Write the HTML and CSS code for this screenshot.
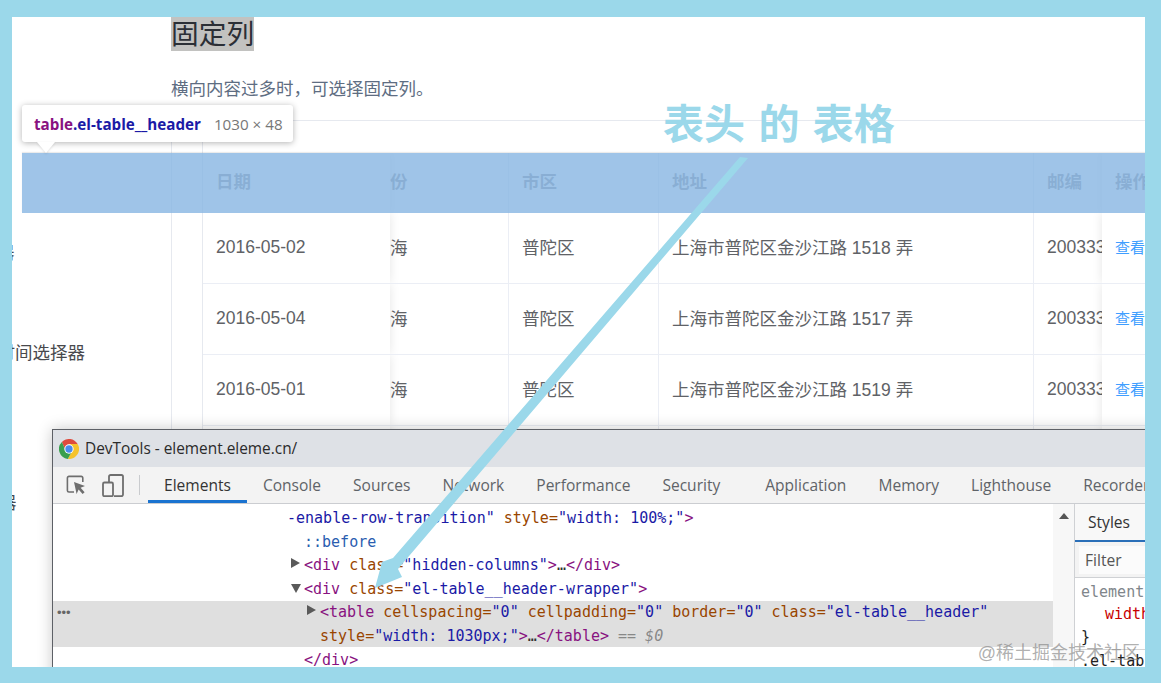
FILE: index.html
```html
<!DOCTYPE html>
<html lang="zh">
<head>
<meta charset="utf-8">
<title>固定列</title>
<link rel="stylesheet" href="styles.css">
</head>
<body>
<div class="canvas">
  <div class="doc">
    <aside class="side">
      <div class="side-item far">选择器</div>
      <div class="side-item"></div>
      <div class="side-item near">时间选择器</div>
      <div class="side-item"></div>
      <div class="side-item"></div>
      <div class="side-item far2">选择器</div>
    </aside>
    <main class="main">
      <h3 class="title"><span class="selected">固定列</span></h3>
      <p class="lead">横向内容过多时，可选择固定列。</p>
      <div class="table">
        <div class="gutter"></div>
        <div class="body">
          <div class="row head">
            <div class="cell fix-l">日期</div>
            <div class="cell clip">份</div>
            <div class="cell">市区</div>
            <div class="cell">地址</div>
            <div class="cell">邮编</div>
            <div class="cell fix-r">操作</div>
          </div>
          <div class="row">
            <div class="cell fix-l num">2016-05-02</div>
            <div class="cell clip">海</div>
            <div class="cell">普陀区</div>
            <div class="cell">上海市普陀区金沙江路 1518 弄</div>
            <div class="cell num">200333</div>
            <div class="cell fix-r"><span class="link">查看</span></div>
          </div>
          <div class="row">
            <div class="cell fix-l num">2016-05-04</div>
            <div class="cell clip">海</div>
            <div class="cell">普陀区</div>
            <div class="cell">上海市普陀区金沙江路 1517 弄</div>
            <div class="cell num">200333</div>
            <div class="cell fix-r"><span class="link">查看</span></div>
          </div>
          <div class="row">
            <div class="cell fix-l num">2016-05-01</div>
            <div class="cell clip">海</div>
            <div class="cell">普陀区</div>
            <div class="cell">上海市普陀区金沙江路 1519 弄</div>
            <div class="cell num">200333</div>
            <div class="cell fix-r"><span class="link">查看</span></div>
          </div>
          <div class="row">
            <div class="cell fix-l"></div>
            <div class="cell clip"></div>
            <div class="cell"></div>
            <div class="cell"></div>
            <div class="cell"></div>
            <div class="cell fix-r"></div>
          </div>
        </div>
      </div>
    </main>
  </div>

  <div class="band"></div>

  <div class="tip">
    <span class="tip-name"><span class="tip-tag">table</span><span class="tip-class">.el-table__header</span></span>
    <span class="tip-size">1030 × 48</span>
  </div>

  <div class="note">表头 的 表格</div>

  <section class="devtools">
    <header class="dt-title">
      <svg class="chrome" viewBox="0 0 24 24" aria-hidden="true">
        <path fill="#dd4b3e" d="M22.39 6A12 12 0 0 0 3.5 3.5L8 14l4-8z"/>
        <path fill="#f5c32c" d="M22.39 6H12l4 8-5.5 9.9A12 12 0 0 0 22.39 6z"/>
        <path fill="#3a9f4f" d="M3.5 3.5A12 12 0 0 0 10.5 23.9L16 14H8z"/>
        <circle cx="12" cy="12" r="5.6" fill="#fff"/>
        <circle cx="12" cy="12" r="4.4" fill="#4a8bec"/>
      </svg>
      <span>DevTools - element.eleme.cn/</span>
    </header>
    <nav class="dt-tabs">
      <svg class="ico-inspect" viewBox="0 0 20 20" aria-hidden="true">
        <path fill="none" stroke="#6e6e6e" stroke-width="1.6" d="M8 17H3a1.6 1.6 0 0 1-1.6-1.6V3A1.6 1.6 0 0 1 3 1.4h12.2A1.6 1.6 0 0 1 16.8 3v4"/>
        <path fill="#6e6e6e" d="M8 7l11 4-4.4 1.8 4 4.4-2 1.8-4-4.4L10.6 19z"/>
      </svg>
      <svg class="ico-device" viewBox="0 0 22 23" aria-hidden="true">
        <path fill="none" stroke="#6e6e6e" stroke-width="1.8" d="M7 8V2.6A1.6 1.6 0 0 1 8.6 1h10.8A1.6 1.6 0 0 1 21 2.6v18a1.6 1.6 0 0 1-1.6 1.6H12"/>
        <rect x="1" y="8.5" width="10" height="13.7" rx="1.4" fill="#f3f3f3" stroke="#6e6e6e" stroke-width="1.8"/>
      </svg>
      <span class="dt-sep"></span>
      <span class="tab on">Elements</span>
      <span class="tab">Console</span>
      <span class="tab">Sources</span>
      <span class="tab">Network</span>
      <span class="tab">Performance</span>
      <span class="tab">Security</span>
      <span class="tab tab-gap">Application</span>
      <span class="tab">Memory</span>
      <span class="tab">Lighthouse</span>
      <span class="tab">Recorder</span>
    </nav>
    <div class="dt-body">
      <div class="dom">
        <div class="ln l0"><span class="v">-enable-row-transition"</span><span class="a"> style=</span><span class="v">"width: 100%;"</span><span class="t">&gt;</span></div>
        <div class="ln l1"><span class="pseudo">::before</span></div>
        <div class="ln l1"><i class="tri"></i><span class="t">&lt;div</span><span class="a"> class=</span><span class="v">"hidden-columns"</span><span class="t">&gt;</span><span class="x">…</span><span class="t">&lt;/div&gt;</span></div>
        <div class="ln l1"><i class="tri down"></i><span class="t">&lt;div</span><span class="a"> class=</span><span class="v">"el-table__header-wrapper"</span><span class="t">&gt;</span></div>
        <div class="picked">
          <span class="dots">•••</span>
          <div class="ln l2"><i class="tri"></i><span class="t">&lt;table</span><span class="a"> cellspacing=</span><span class="v">"0"</span><span class="a"> cellpadding=</span><span class="v">"0"</span><span class="a"> border=</span><span class="v">"0"</span><span class="a"> class=</span><span class="v">"el-table__header"</span></div>
          <div class="ln l2"><span class="a">style=</span><span class="v">"width: 1030px;"</span><span class="t">&gt;</span><span class="x">…</span><span class="t">&lt;/table&gt;</span><span class="eq"> == $0</span></div>
        </div>
        <div class="ln l1"><span class="t">&lt;/div&gt;</span></div>
      </div>
      <div class="scroll"><i class="scroll-up"></i></div>
      <div class="styles">
        <div class="st-tab"><span>Styles</span></div>
        <div class="st-filter"><span>Filter</span></div>
        <div class="st-rules">
          <div class="rl gray">element.style {</div>
          <div class="rl red">width: 100%;</div>
          <div class="rl dark">}</div>
          <div class="rl dark sepd">.el-table</div>
        </div>
      </div>
    </div>
  </section>

  <svg class="arrow" viewBox="0 0 1161 683" aria-hidden="true">
    <polygon fill="#9bd8ea" points="740,157 748,158 398,569 402,577 375,588 382,562 393,558"/>
  </svg>

  <div class="mark">@稀土掘金技术社区</div>
</div>
</body>
</html>
```
FILE: styles.css
```css
* { box-sizing: border-box; }
html, body { margin: 0; padding: 0; }
body {
  width: 1161px;
  height: 683px;
  background: #9bd8ea;
  padding: 17px 16px 16px 12px;
  overflow: hidden;
  font-family: "Liberation Sans", "Noto Sans CJK SC", sans-serif;
}
.canvas {
  position: relative;
  width: 1133px;
  height: 650px;
  background: #fff;
  overflow: hidden;
}
.doc { display: flex; width: 1133px; height: 650px; }
.side {
  width: 159px;
  flex: none;
  padding-top: 211px;
  overflow: hidden;
  color: #48494d;
  font-size: 17.5px;
}
.side-item { height: 50px; line-height: 50px; white-space: nowrap; }
.near { margin-left: -14.5px; }
.far { margin-left: -50px; }
.far2 { margin-left: -48px; }
.main { flex: 1; min-width: 0; }
.title { margin: 0; height: 33.5px; font-weight: 400; font-size: 27.7px; line-height: 35.5px; color: #2b2f36; }
.selected { display: inline-block; height: 33.5px; background: #c2c2c0; }
.lead { margin: 0; height: 69.5px; padding-top: 26px; font-size: 17.5px; line-height: 25px; color: #5e6d82; }
.table { display: flex; border-left: 1px solid #e6e9ef; border-top: 1px solid #e6e9ef; }
.gutter { width: 31px; flex: none; border-right: 1px solid #e6e9ef; }
.body { padding-top: 32px; width: 960px; flex: none; }
.row {
  display: grid;
  grid-template-columns: 187px 119px 150px 375px 68px 44px;
  height: 71px;
  border-bottom: 1px solid #ebeef5;
  color: #606266;
  font-size: 17.5px;
}
.head { height: 60px; font-weight: 700; color: #909399; border-bottom: 0; }
.cell {
  display: flex;
  align-items: center;
  padding: 0 0 4px 13px;
  border-right: 1px solid #ebeef5;
  white-space: nowrap;
  overflow: hidden;
  background: #fff;
}
.head .cell { padding-bottom: 6px; }
.cell.num { padding-bottom: 2px; }
.cell:nth-child(5) { border-right: 0; }
.clip { padding-left: 0; }
.fix-l { position: relative; z-index: 2; border-right: 0; box-shadow: 0 0 10px rgba(0, 0, 0, .1); clip-path: inset(0 -12px 0 0); }
.fix-r { position: relative; z-index: 2; border-right: 0; box-shadow: 0 0 10px rgba(0, 0, 0, .1); clip-path: inset(0 0 0 -12px); }
.link { color: #409eff; font-size: 15px; }
.band {
  position: absolute;
  z-index: 3;
  left: 10px;
  top: 136px;
  right: 0;
  height: 60px;
  background: rgba(135, 181, 226, .8);
  box-shadow: 0 -1px 1px rgba(0, 0, 0, .08);
}
.tip {
  position: absolute;
  z-index: 4;
  left: 10px;
  top: 88px;
  width: 271px;
  height: 37px;
  padding: 1px 0 0 12px;
  display: flex;
  align-items: center;
  gap: 13px;
  background: #fff;
  border-radius: 3px;
  box-shadow: 0 1px 6px rgba(0, 0, 0, .3);
  font-family: "Open Sans", "Noto Sans", sans-serif;
  font-size: 15.2px;
  white-space: nowrap;
}
.tip::after {
  content: "";
  position: absolute;
  left: 15px;
  top: 37px;
  border: 9px solid transparent;
  border-bottom: 0;
  border-top: 11px solid #fff;
  filter: drop-shadow(0 1px 1px rgba(0, 0, 0, .12));
}
.tip-name { font-weight: 700; }
.tip-tag { color: #881280; }
.tip-class { color: #1a1aa6; }
.tip-size { color: #777; }
.note {
  position: absolute;
  z-index: 5;
  left: 651px;
  top: 82px;
  font-size: 41px;
  line-height: 52px;
  font-weight: 700;
  word-spacing: 2px;
  color: #9bd8ea;
  white-space: nowrap;
}
.devtools {
  position: absolute;
  z-index: 6;
  left: 40px;
  top: 412px;
  width: 1120px;
  height: 300px;
  background: #fff;
  border: 1px solid #5d6066;
  box-shadow: 0 0 14px rgba(0, 0, 0, .22);
  font-family: "Open Sans", "Noto Sans", sans-serif;
}
.dt-title {
  display: flex;
  align-items: center;
  gap: 6px;
  height: 37px;
  padding-left: 6px;
  background: #dee1e6;
  font-size: 15.4px;
  color: #2b2b2b;
}
.chrome { width: 20px; height: 20px; flex: none; }
.dt-tabs {
  display: flex;
  align-items: center;
  height: 37px;
  background: #f3f3f3;
  border-bottom: 1px solid #cbcdd1;
  font-size: 15.55px;
  color: #5f6368;
  white-space: nowrap;
}
.ico-inspect { width: 20px; height: 20px; margin-left: 13px; flex: none; }
.ico-device { width: 22px; height: 23px; margin-left: 16px; flex: none; }
.dt-sep { width: 1px; height: 20px; margin: 0 8px 0 15px; background: #c9cbce; flex: none; }
.tab { height: 36px; line-height: 36px; padding: 0 16px; }
.tab.on { color: #333; box-shadow: inset 0 -3px 0 #1a73d0; }
.tab-gap { margin-left: 13px; }
.dt-body { display: flex; height: 226px; }
.dom {
  position: relative;
  width: 1000px;
  flex: none;
  padding-top: 3px;
  font-family: "DejaVu Sans Mono", monospace;
  font-size: 15px;
  line-height: 23.6px;
}
.ln { position: relative; height: 23.6px; white-space: pre; }
.l0 { padding-left: 234px; }
.l1 { padding-left: 251px; }
.l2 { padding-left: 267px; }
.t { color: #881280; }
.a { color: #994500; }
.v { color: #1a1aa6; }
.x { color: #333; }
.pseudo { color: #2a5db0; }
.eq { color: #888; font-style: italic; }
.picked { position: relative; height: 46px; margin-bottom: 1.2px; background: #dfdfdf; }
.dots { position: absolute; left: 4px; top: 0; font-family: "Liberation Sans", sans-serif; font-size: 13px; color: #666; }
.tri {
  position: absolute;
  width: 0;
  height: 0;
  margin-left: -13px;
  margin-top: 4px;
  border-left: 9px solid #5a5a5a;
  border-top: 5.5px solid transparent;
  border-bottom: 5.5px solid transparent;
}
.tri.down {
  margin-left: -13px;
  margin-top: 6px;
  border-top: 9px solid #5a5a5a;
  border-left: 5.5px solid transparent;
  border-right: 5.5px solid transparent;
  border-bottom: 0;
}
.scroll { width: 22px; flex: none; background: #f7f7f7; border-right: 1px solid #cfd1d4; display: flex; justify-content: center; align-items: flex-start; padding-top: 9px; }
.scroll-up { display: block; width: 0; height: 0; border: 5px solid transparent; border-top: 0; border-bottom: 6px solid #555; }
.styles { flex: 1; min-width: 0; }
.st-tab { height: 38px; border-bottom: 2px solid #2a6fb8; line-height: 37px; padding-left: 13px; font-size: 15.6px; color: #333; background: #f8f8f8; width: 70px; }
.st-filter { height: 36px; padding: 4px 0 0 4px; background: #f3f3f3; border-bottom: 1px solid #cfd1d4; font-size: 15.6px; color: #555; width: 70px; }
.st-filter span { display: block; height: 28px; line-height: 28px; padding-left: 6px; background: #fbfbfb; }
.st-rules { font-family: "DejaVu Sans Mono", monospace; font-size: 15px; line-height: 22.4px; padding: 3px 0 0 6px; width: 70px; overflow: hidden; }
.rl { height: 22.4px; white-space: pre; }
.gray { color: #80868b; }
.red { color: #c80000; padding-left: 24px; }
.dark { color: #222; }
.sepd { border-top: 1px solid #d5d5d5; margin: 1px 0 0 -6px; padding-left: 6px; }
.arrow { position: absolute; z-index: 7; left: -12px; top: -17px; width: 1161px; height: 683px; pointer-events: none; }
.mark {
  position: absolute;
  z-index: 8;
  right: 5px;
  bottom: 2px;
  font-size: 18px;
  line-height: 24px;
  color: rgba(125, 125, 125, .62);
  white-space: nowrap;
}
```
